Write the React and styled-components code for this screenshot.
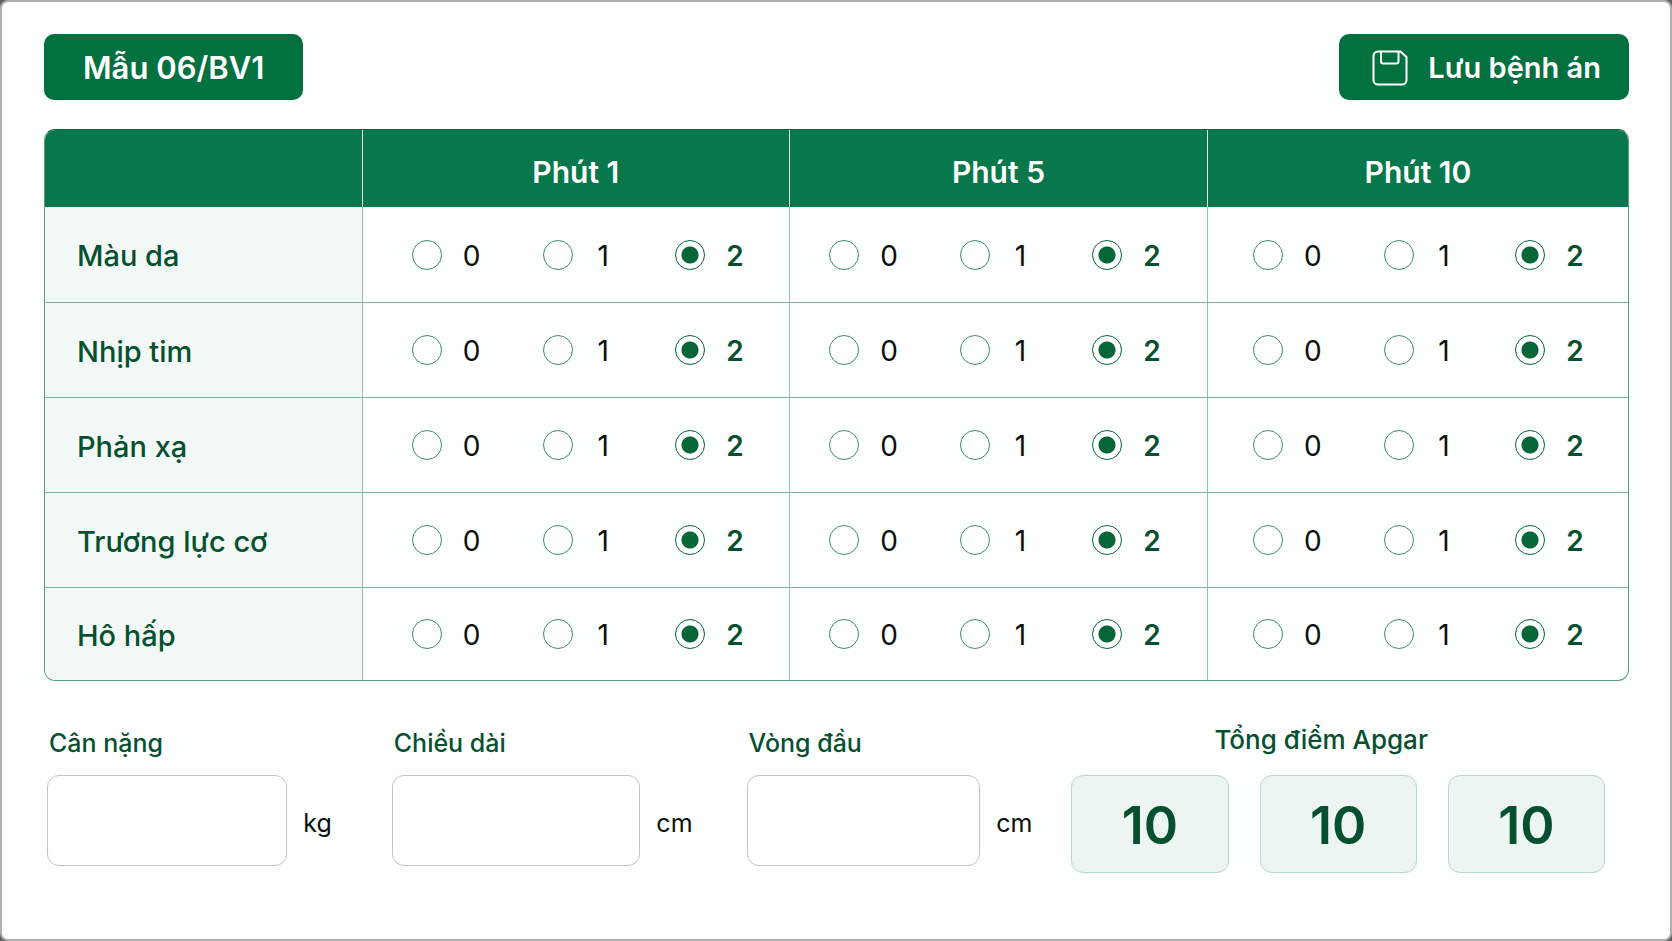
import React, { useState } from 'react';
import styled, { createGlobalStyle } from 'styled-components';

const GlobalStyle = createGlobalStyle`
  * {
    box-sizing: border-box;
  }

  body {
    margin: 0;
    background: #5c605e;
    font-family: Inter, 'Noto Sans', sans-serif;
    color: #0b0f0d;
  }
`;

const criteria = [
  { id: 'color', label: 'Màu da' },
  { id: 'pulse', label: 'Nhịp tim' },
  { id: 'reflex', label: 'Phản xạ' },
  { id: 'tone', label: 'Trương lực cơ' },
  { id: 'breath', label: 'Hô hấp' },
];

const minutes = [
  { id: 'm1', label: 'Phút 1', width: '27%', left: 49, right: 44 },
  { id: 'm5', label: 'Phút 5', width: '26.4%', left: 39, right: 45 },
  { id: 'm10', label: 'Phút 10', width: '26.6%', left: 45, right: 43 },
];

const measures = [
  { id: 'weight', label: 'Cân nặng', unit: 'kg', space: 60 },
  { id: 'length', label: 'Chiều dài', unit: 'cm', space: 54 },
  { id: 'head', label: 'Vòng đầu', unit: 'cm', space: 39 },
];

const Page = styled.main`
  min-height: 100vh;
  padding: 32px 41px 40px 42px;
  background: #fdfefe;
  border: 2px solid #adadad;
  border-radius: 8px;
`;

const TopBar = styled.header`
  display: flex;
  justify-content: space-between;
  align-items: center;
  margin-bottom: 29px;
`;

const FormCode = styled.h1`
  margin: 0;
  padding: 16px 39px 14px;
  border-radius: 10px;
  background: #037040;
  color: #fff;
  font-size: 31px;
  font-weight: 600;
  line-height: 36px;
`;

const SaveButton = styled.button`
  display: flex;
  align-items: center;
  gap: 20px;
  padding: 16px 28px 14px 33px;
  border: none;
  border-radius: 10px;
  background: #037040;
  color: #fff;
  font-family: inherit;
  font-size: 29px;
  font-weight: 600;
  line-height: 36px;
  cursor: pointer;
`;

const ScoreTable = styled.table`
  width: 100%;
  table-layout: fixed;
  border-collapse: separate;
  border-spacing: 0;
  border: 1px solid #57a080;
  border-top-color: #06683f;
  border-radius: 11px;
  overflow: hidden;
`;

const HeadCell = styled.th`
  width: ${({ $width }) => $width};
  height: 77px;
  padding: 7px 0 0;
  background: #08774b;
  color: #fff;
  font-size: 30px;
  font-weight: 600;

  & + & {
    border-left: 1px solid #e4f2eb;
  }
`;

const Row = styled.tr`
  height: 95px;

  &:first-child {
    height: 96px;
  }

  &:last-child {
    height: 92px;
  }

  &:not(:last-child) > * {
    border-bottom: 1px solid #7db39b;
  }
`;

const RowLabel = styled.th`
  padding: 2px 0 0 32px;
  background: #f1f8f5;
  color: #07502f;
  font-size: 29px;
  font-weight: 500;
  text-align: left;
`;

const ScoreCell = styled.td`
  padding: 0 ${({ $right }) => $right}px 0 ${({ $left }) => $left}px;
  border-left: 1px solid #93c0ad;
`;

const Options = styled.div`
  display: flex;
  justify-content: space-between;
`;

const Option = styled.label`
  display: flex;
  align-items: center;
  gap: 20px;
  color: ${({ $active }) => ($active ? '#07502f' : '#0b0f0d')};
  font-size: 28px;
  font-weight: ${({ $active }) => ($active ? 600 : 400)};
  cursor: pointer;
`;

const OptionValue = styled.span`
  width: 20px;
  padding-top: 2px;
  text-align: center;
`;

const Radio = styled.input`
  appearance: none;
  flex: none;
  width: 30px;
  height: 30px;
  margin: 0;
  border: 1px solid #3c8c67;
  border-radius: 50%;
  background: #fff;
  cursor: pointer;

  &:checked {
    border-color: #056637;
    background: radial-gradient(circle, #056637 0 8px, #fff 9px);
  }
`;

const Summary = styled.section`
  display: grid;
  grid-template-columns: minmax(0, 345fr) minmax(0, 355fr) minmax(0, 325fr) minmax(0, 534fr);
  margin: 43px 24px 0 3px;
`;

const Field = styled.div`
  padding-right: ${({ $space }) => $space}px;
`;

const FieldLabel = styled.label`
  display: block;
  padding: 3px 0 0 2px;
  margin-bottom: 16px;
  color: #07502f;
  font-size: 25px;
  font-weight: 500;
  line-height: 32px;
`;

const FieldRow = styled.div`
  display: flex;
  align-items: center;
  gap: 16px;
`;

const FieldInput = styled.input`
  flex: 1;
  min-width: 0;
  height: 91px;
  padding: 0 20px;
  border: 1px solid #c2c4c3;
  border-radius: 12px;
  background: #fff;
  color: inherit;
  font-family: inherit;
  font-size: 28px;
`;

const Unit = styled.span`
  padding-top: 4px;
  font-size: 25px;
`;

const TotalTitle = styled.h2`
  margin: 0 0 19px;
  padding-right: 34px;
  color: #07502f;
  font-size: 26px;
  font-weight: 500;
  line-height: 32px;
  text-align: center;
`;

const Totals = styled.div`
  display: grid;
  grid-template-columns: repeat(3, 1fr);
  gap: 31px;
`;

const Total = styled.output`
  display: flex;
  align-items: center;
  justify-content: center;
  height: 98px;
  padding-top: 3px;
  border: 1px solid #b9d9cb;
  border-radius: 12px;
  background: #ecf5f1;
  color: #07502f;
  font-size: 52px;
  font-weight: 600;
`;

const SaveIcon = () => (
  <svg width="36" height="36" viewBox="0 0 36 36" fill="none" stroke="currentColor" strokeWidth="2" strokeLinejoin="round" aria-hidden="true">
    <path d="M6 1.5H28.5L34.5 7V30a4.5 4.5 0 0 1-4.5 4.5H6A4.5 4.5 0 0 1 1.5 30V6A4.5 4.5 0 0 1 6 1.5Z" />
    <path d="M9 1.5V11.5a2 2 0 0 0 2 2H24.5a2 2 0 0 0 2-2V1.5" />
  </svg>
);

const App = () => {
  const [scores, setScores] = useState(() =>
    Object.fromEntries(minutes.map((m) => [m.id, Object.fromEntries(criteria.map((c) => [c.id, 2]))]))
  );

  const setScore = (minute, criterion, value) => {
    setScores((prev) => ({ ...prev, [minute]: { ...prev[minute], [criterion]: value } }));
  };

  const totalOf = (minute) => Object.values(scores[minute]).reduce((sum, value) => sum + value, 0);

  return (
    <>
      <GlobalStyle />
      <Page>
        <TopBar>
          <FormCode>Mẫu 06/BV1</FormCode>
          <SaveButton type="button">
            <SaveIcon />
            Lưu bệnh án
          </SaveButton>
        </TopBar>

        <ScoreTable>
          <thead>
            <tr>
              <HeadCell as="td" $width="20%" />
              {minutes.map((m) => (
                <HeadCell key={m.id} scope="col" $width={m.width}>{m.label}</HeadCell>
              ))}
            </tr>
          </thead>
          <tbody>
            {criteria.map((c) => (
              <Row key={c.id}>
                <RowLabel scope="row">{c.label}</RowLabel>
                {minutes.map((m) => (
                  <ScoreCell key={m.id} $left={m.left} $right={m.right}>
                    <Options>
                      {[0, 1, 2].map((value) => (
                        <Option key={value} $active={scores[m.id][c.id] === value}>
                          <Radio
                            type="radio"
                            name={`${c.id}-${m.id}`}
                            checked={scores[m.id][c.id] === value}
                            onChange={() => setScore(m.id, c.id, value)}
                          />
                          <OptionValue>{value}</OptionValue>
                        </Option>
                      ))}
                    </Options>
                  </ScoreCell>
                ))}
              </Row>
            ))}
          </tbody>
        </ScoreTable>

        <Summary>
          {measures.map((f) => (
            <Field key={f.id} $space={f.space}>
              <FieldLabel htmlFor={f.id}>{f.label}</FieldLabel>
              <FieldRow>
                <FieldInput id={f.id} type="text" inputMode="decimal" />
                <Unit>{f.unit}</Unit>
              </FieldRow>
            </Field>
          ))}
          <div>
            <TotalTitle>Tổng điểm Apgar</TotalTitle>
            <Totals>
              {minutes.map((m) => (
                <Total key={m.id}>{totalOf(m.id)}</Total>
              ))}
            </Totals>
          </div>
        </Summary>
      </Page>
    </>
  );
};

export default App;
